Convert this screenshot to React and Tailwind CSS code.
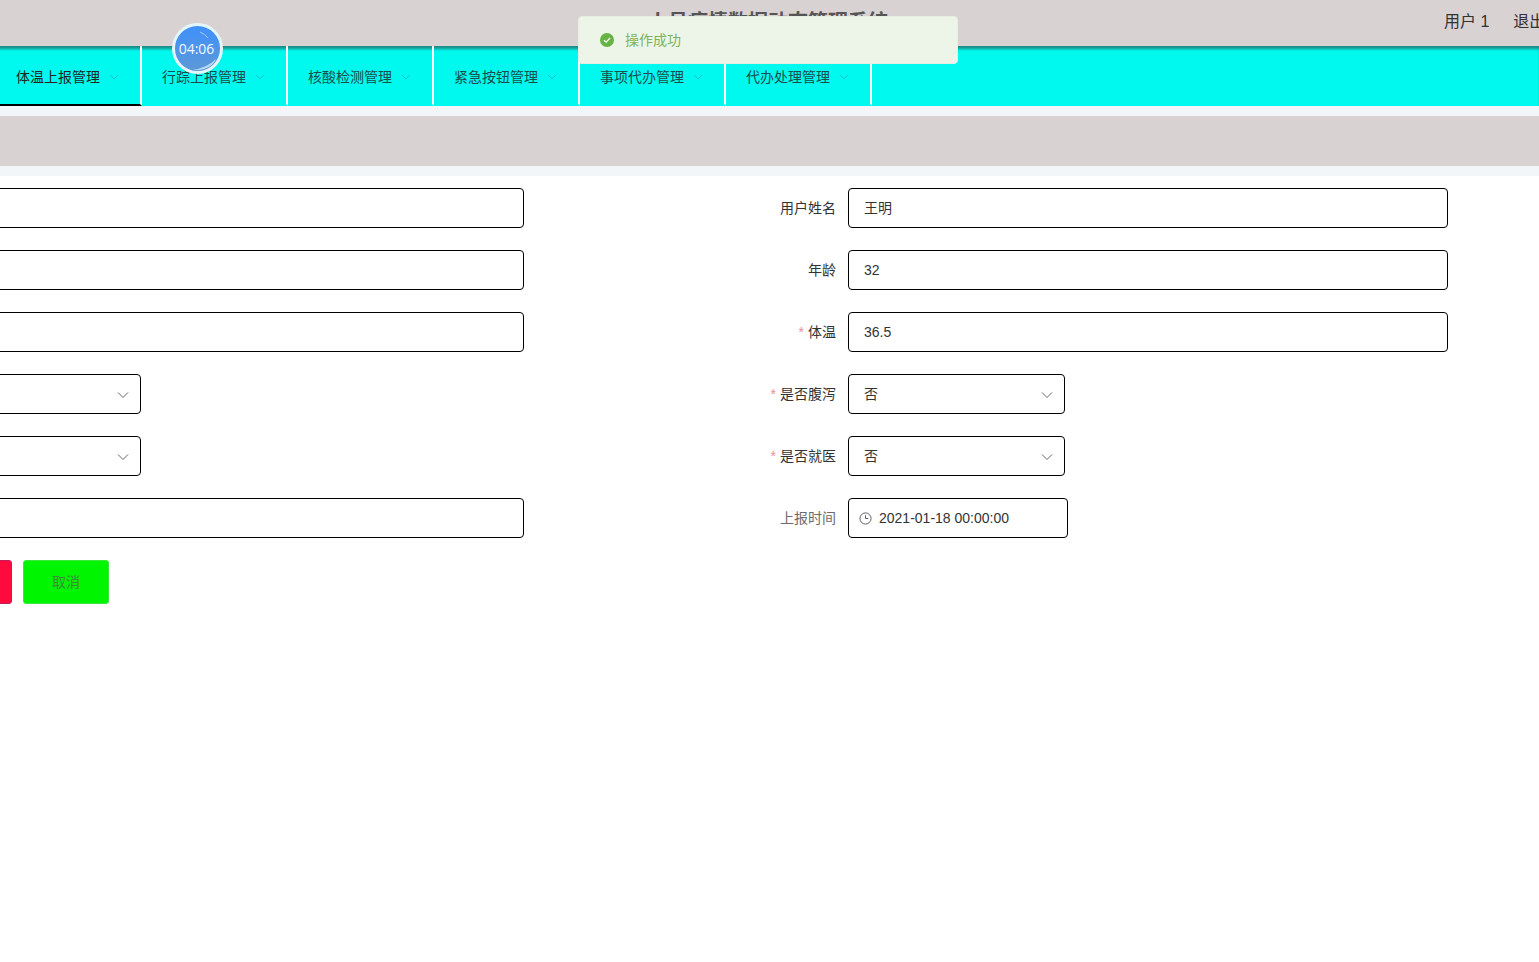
const cjk = "font-['Liberation_Sans','Noto_Sans_CJK_SC',sans-serif]";

const menus = ["体温上报管理", "行踪上报管理", "核酸检测管理", "紧急按钮管理", "事项代办管理", "代办处理管理"];

function Chevron({ className }) {
  return (
    <svg viewBox="0 0 12 8" fill="none" stroke="currentColor" strokeWidth="1" className={className}>
      <path d="M1 1.5 L6 6.5 L11 1.5" />
    </svg>
  );
}

function MenuTab({ label, active }) {
  return (
    <div className={`flex items-center w-[146px] h-[60px] pl-[20px] pt-[4px] border-r-2 border-b-2 border-r-white ${active ? "border-b-black text-[#222]" : "border-b-transparent text-[#1d4a4a]"}`}>
      <span className="text-sm">{label}</span>
      <Chevron className="w-[10px] h-[6px] ml-[9px] -mt-[1px] text-[#1fa8c4]" />
    </div>
  );
}

function Label({ text, required, muted }) {
  return (
    <div className={`w-[120px] pr-3 text-right text-sm ${muted ? "text-[#6b6b6b]" : "text-[#333]"}`}>
      {required && <span className="text-[#eb8f9c] mr-1">*</span>}
      {text}
    </div>
  );
}

function Box({ className, children }) {
  return (
    <div className={`h-10 border border-black rounded-[4px] bg-white flex items-center text-sm text-[#333] ${className}`}>
      {children}
    </div>
  );
}

function InputRow({ label, required, value }) {
  return (
    <div className="flex items-center">
      <Label text={label} required={required} />
      <Box className="w-[600px] pl-[15px]">{value}</Box>
    </div>
  );
}

function SelectRow({ label, required, value }) {
  return (
    <div className="flex items-center">
      <Label text={label} required={required} />
      <Box className="w-[217px] pl-[15px] pr-[11px] justify-between">
        <span>{value}</span>
        <Chevron className="w-[12px] h-[8px] mt-[1px] text-[#666]" />
      </Box>
    </div>
  );
}

export default function App() {
  return (
    <div className={`${cjk} w-[1539px] h-[962px] overflow-hidden bg-white`}>
      <div className="relative h-[46px] bg-[#d9d2d3] flex items-center">
        <div className="w-full text-center text-xl font-bold text-[#555] -mt-[3px] pr-[3px]">人员疫情数据动态管理系统</div>
        <div className="absolute left-[1444px] top-[10px] flex gap-6 text-base text-[#333] whitespace-nowrap">
          <span>用户 1</span>
          <span>退出</span>
        </div>
      </div>

      <div className="h-[60px] bg-[#00f9ef] flex -ml-[4px] shadow-[inset_0_4px_3px_-1px_rgba(40,90,90,0.7)]">
        {menus.map((m, i) => (
          <MenuTab key={m} label={m} active={i === 0} />
        ))}
      </div>

      <div className="h-2.5 bg-[#f3f6f9]"></div>
      <div className="h-[50px] bg-[#d8d2d2]"></div>
      <div className="h-2.5 bg-[#f3f6f9]"></div>

      <div className="flex -ml-[196px] pt-3">
        <div className="w-[924px] shrink-0 flex flex-col gap-[22px]">
          <InputRow />
          <InputRow />
          <InputRow />
          <SelectRow />
          <SelectRow />
          <InputRow />
          <div className="flex gap-[11px] pl-[120px]">
            <div className="w-[88px] h-11 rounded-[3px] bg-[#ff0a3c] border border-[#c0205a]"></div>
            <div className="w-[86px] h-11 rounded-[3px] bg-[#00f500] border border-[#3ce83c] flex items-center justify-center text-sm text-[#3c8a3c]">取消</div>
          </div>
        </div>
        <div className="flex flex-col gap-[22px]">
          <InputRow label="用户姓名" value="王明" />
          <InputRow label="年龄" value="32" />
          <InputRow label="体温" required value="36.5" />
          <SelectRow label="是否腹泻" required value="否" />
          <SelectRow label="是否就医" required value="否" />
          <div className="flex items-center">
            <Label text="上报时间" muted />
            <Box className="w-[220px] pl-[10px]">
              <svg viewBox="0 0 14 14" fill="none" stroke="#555" strokeWidth="1" className="w-[13px] h-[13px] mr-[7px]">
                <circle cx="7" cy="7" r="6" />
                <path d="M7 3.5 V7 H10" />
              </svg>
              <span className="text-sm">2021-01-18 00:00:00</span>
            </Box>
          </div>
        </div>
      </div>

      {/* toast */}
      <div className="absolute left-[578px] top-4 w-[380px] h-12 rounded-[4px] bg-[#edf5e8] border border-[#e6efdf] flex items-center pl-[21px] text-sm text-[#7cb35a]">
        <svg viewBox="0 0 16 16" className="w-3.5 h-3.5 mr-[11px]">
          <circle cx="8" cy="8" r="8" fill="#67b346" />
          <path d="M4.5 8.2 L7 10.5 L11.5 5.8" fill="none" stroke="#fff" strokeWidth="1.5" />
        </svg>
        操作成功
      </div>

      {/* timer badge */}
      <div className="absolute left-[172px] top-[23px] w-[51px] h-[51px] rounded-full border-[3px] border-[#e4f6fb] bg-gradient-to-b from-[#3f90fb] to-[#5c98d6] flex items-center justify-center pr-[2px] font-['Open_Sans',sans-serif] text-sm text-[#f2f8ff]">
        <svg viewBox="0 0 45 45" fill="none" className="absolute inset-0 w-full h-full">
          <path d="M25 6 Q30 8 33 12" stroke="#bcd8fb" strokeWidth="0.8" />
          <path d="M17 44 Q32 42 41 33 Q36 45 17 44 Z" fill="#cfe6f6" fillOpacity="0.8" />
        </svg>
        <span className="relative">04:06</span>
      </div>
    </div>
  );
}
